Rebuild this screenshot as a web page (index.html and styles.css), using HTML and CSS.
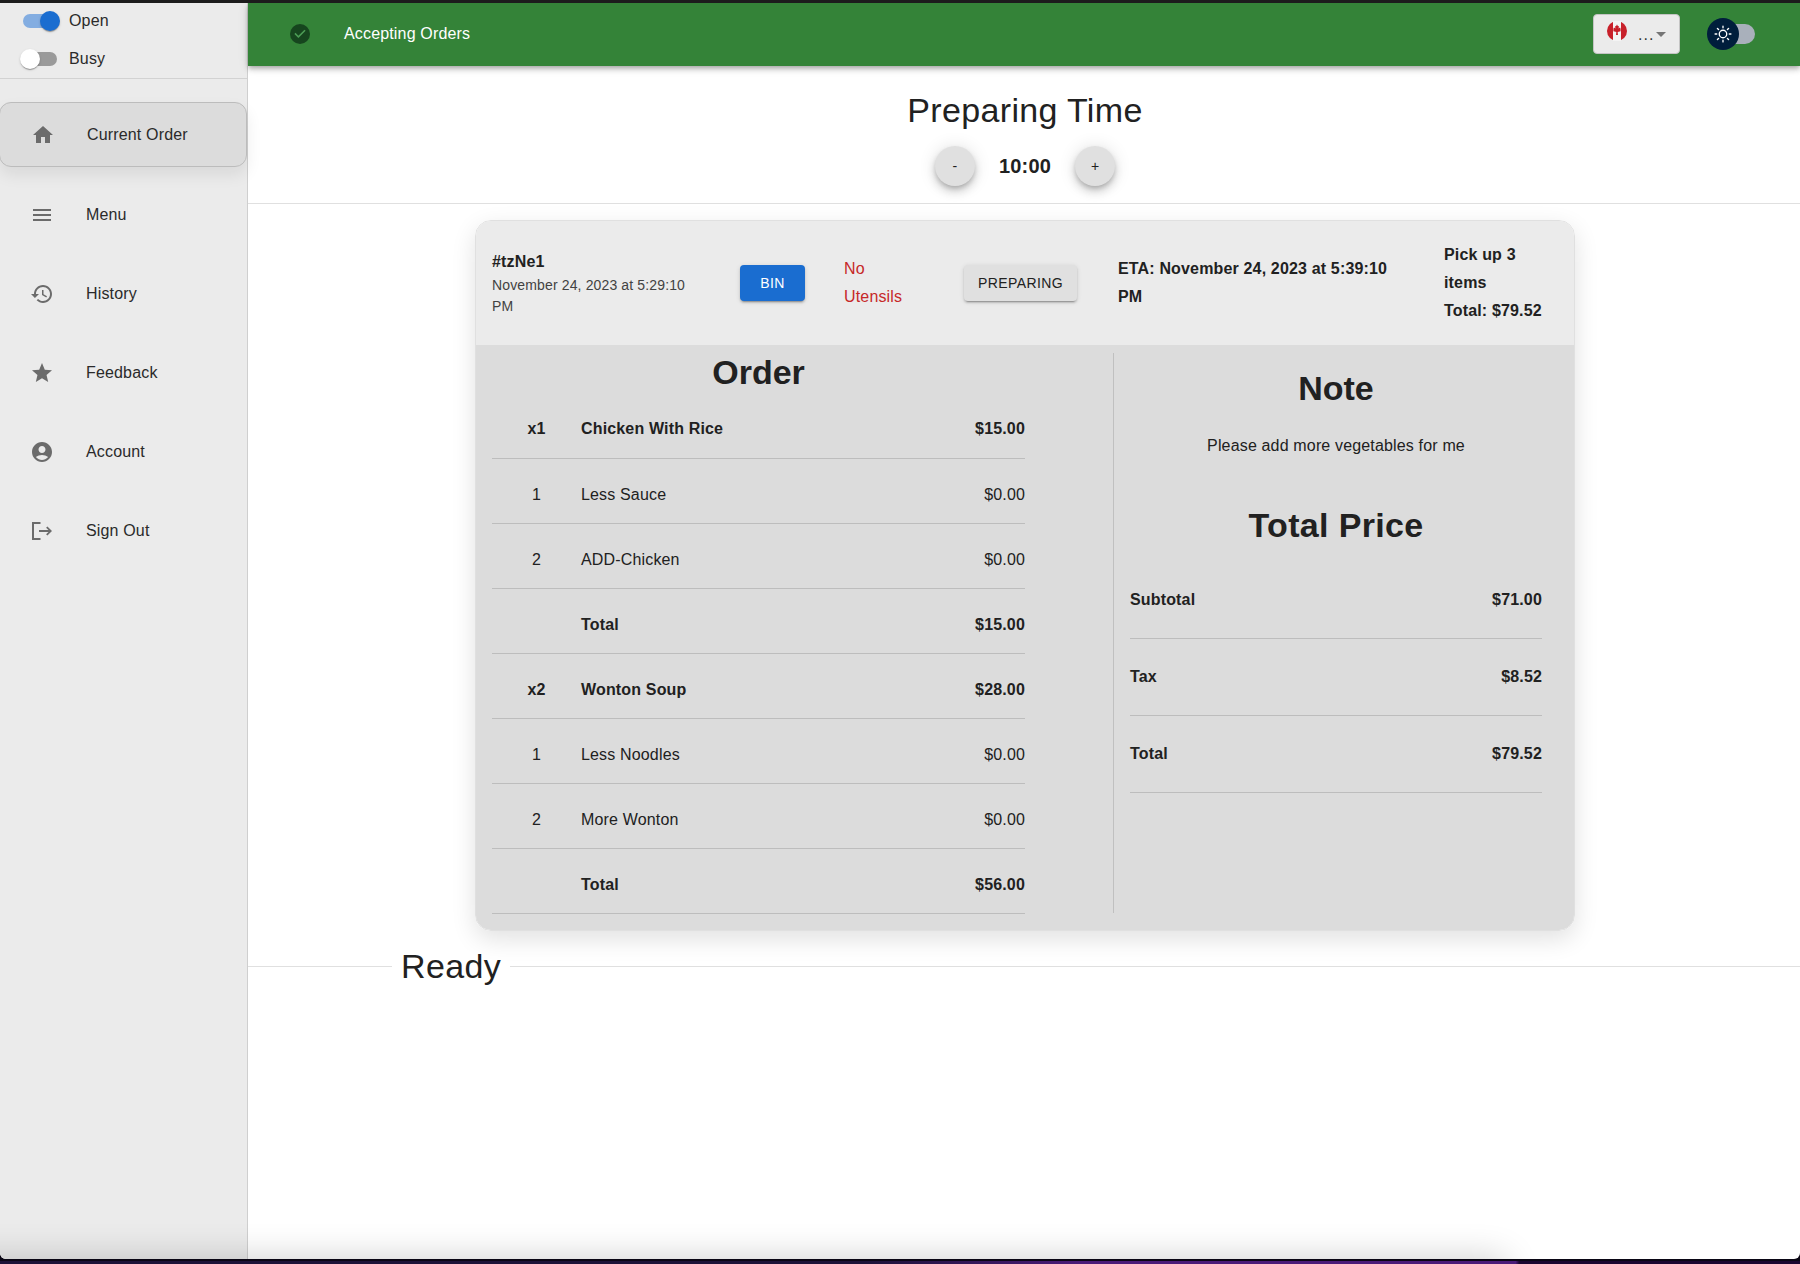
FILE: index.html
```html
<!DOCTYPE html>
<html lang="en">
<head>
    <meta charset="UTF-8">
    <meta name="viewport" content="width=device-width, initial-scale=1.0">
    <title>Current Order</title>
    <link rel="stylesheet" href="styles.css">
</head>
<body>
    <div class="window">
        <aside class="sidebar">
            <div class="switches">
                <label class="switch-row">
                    <span class="switch switch-on"><span class="switch-thumb"></span></span>
                    <span>Open</span>
                </label>
                <label class="switch-row">
                    <span class="switch"><span class="switch-thumb"></span></span>
                    <span>Busy</span>
                </label>
            </div>
            <nav class="nav">
                <a class="nav-item active">
                    <svg class="nav-icon" viewBox="0 0 24 24"><path d="M10 20v-6h4v6h5v-8h3L12 3 2 12h3v8z"/></svg>
                    <span>Current Order</span>
                </a>
                <a class="nav-item">
                    <svg class="nav-icon" viewBox="0 0 24 24"><path d="M3 18h18v-2H3v2zm0-5h18v-2H3v2zm0-7v2h18V6H3z"/></svg>
                    <span>Menu</span>
                </a>
                <a class="nav-item">
                    <svg class="nav-icon" viewBox="0 0 24 24"><path d="M13 3c-4.97 0-9 4.03-9 9H1l3.89 3.89.07.14L9 12H6c0-3.87 3.13-7 7-7s7 3.13 7 7-3.13 7-7 7c-1.93 0-3.68-.79-4.94-2.06l-1.42 1.42C8.27 19.99 10.51 21 13 21c4.97 0 9-4.03 9-9s-4.03-9-9-9zm-1 5v5l4.28 2.54.72-1.21-3.5-2.08V8H12z"/></svg>
                    <span>History</span>
                </a>
                <a class="nav-item">
                    <svg class="nav-icon" viewBox="0 0 24 24"><path d="M12 17.27 18.18 21l-1.64-7.03L22 9.24l-7.19-.61L12 2 9.19 8.63 2 9.24l5.46 4.73L5.82 21z"/></svg>
                    <span>Feedback</span>
                </a>
                <a class="nav-item">
                    <svg class="nav-icon" viewBox="0 0 24 24"><path d="M12 2C6.48 2 2 6.48 2 12s4.48 10 10 10 10-4.48 10-10S17.52 2 12 2zm0 4c1.93 0 3.5 1.57 3.5 3.5S13.93 13 12 13s-3.5-1.57-3.5-3.5S10.07 6 12 6zm0 14c-2.03 0-4.43-.82-6.14-2.88C7.55 15.8 9.68 15 12 15s4.45.8 6.14 2.12C16.43 19.18 14.03 20 12 20z"/></svg>
                    <span>Account</span>
                </a>
                <a class="nav-item">
                    <svg class="nav-icon" viewBox="0 0 24 24"><path d="M10.5 3.1H2v17.800h8.500V19H4V5h6.500zM22 12l-4.600-4.600-1.300 1.300 2.400 2.400H9v1.800h9.500l-2.400 2.400 1.300 1.300z"/></svg>
                    <span>Sign Out</span>
                </a>
            </nav>
        </aside>

        <div class="main">
            <header class="topbar">
                <svg class="status-icon" viewBox="2 2 20 20"><circle cx="12" cy="12" r="10" fill="#16451e"/><path fill="#4c9c55" d="M10 17l-5-5 1.41-1.41L10 14.17l7.59-7.59L19 8l-9 9z" transform="translate(2.4 2.4) scale(.8)"/></svg>
                <span class="status-text">Accepting Orders</span>
                <div class="lang-select">
                    <svg class="flag" viewBox="0 0 20 20">
                        <circle cx="10" cy="10" r="10" fill="#c8202a"/>
                        <rect x="6" y="0" width="8" height="20" fill="#f4f4f4"/>
                        <path fill="#c8202a" d="M10 3.500l1 1.800.9-.4-.3 2.600 1.400-1 .6 1.200v2.600l-2.900.7.300 3h-2l.3-3-2.900-.7V7.700l.6-1.200 1.400 1-.3-2.600.9.400z"/>
                    </svg>
                    <span class="lang-dots">...</span>
                    <span class="lang-caret"></span>
                </div>
                <div class="theme-toggle">
                    <span class="theme-track"></span>
                    <span class="theme-thumb">
                        <svg viewBox="0 0 24 24" class="sun"><circle cx="12" cy="12" r="4.5" fill="none" stroke="#fff" stroke-width="1.6"/><path stroke="#fff" stroke-width="1.6" stroke-linecap="round" d="M12 2.500v2M12 19.500v2M2.500 12h2M19.500 12h2M5.300 5.300l1.400 1.400M17.300 17.300l1.400 1.400M5.300 18.700l1.400-1.400M17.300 6.700l1.400-1.400"/></svg>
                    </span>
                </div>
            </header>

            <section class="timer">
                <h2 class="timer-title">Preparing Time</h2>
                <div class="timer-controls">
                    <button class="round-btn">-</button>
                    <span class="timer-value">10:00</span>
                    <button class="round-btn">+</button>
                </div>
            </section>

            <div class="order-card">
                <div class="order-head">
                    <div class="order-id">
                        <strong>#tzNe1</strong>
                        <p>November 24, 2023 at 5:29:10 PM</p>
                    </div>
                    <div><button class="btn btn-blue">BIN</button></div>
                    <div class="order-flag">No Utensils</div>
                    <div><button class="btn btn-grey">PREPARING</button></div>
                    <div class="order-eta">ETA: November 24, 2023 at 5:39:10 PM</div>
                    <div class="order-pickup">Pick up 3 items<br>Total: $79.52</div>
                </div>
                <div class="order-body">
                    <div class="order-left">
                        <h2 class="order-title">Order</h2>
                        <table class="items">
                            <tr class="bold"><td class="qty">x1</td><td>Chicken With Rice</td><td class="price">$15.00</td></tr>
                            <tr><td class="qty">1</td><td>Less Sauce</td><td class="price">$0.00</td></tr>
                            <tr><td class="qty">2</td><td>ADD-Chicken</td><td class="price">$0.00</td></tr>
                            <tr class="bold"><td class="qty"></td><td>Total</td><td class="price">$15.00</td></tr>
                            <tr class="bold"><td class="qty">x2</td><td>Wonton Soup</td><td class="price">$28.00</td></tr>
                            <tr><td class="qty">1</td><td>Less Noodles</td><td class="price">$0.00</td></tr>
                            <tr><td class="qty">2</td><td>More Wonton</td><td class="price">$0.00</td></tr>
                            <tr class="bold"><td class="qty"></td><td>Total</td><td class="price">$56.00</td></tr>
                        </table>
                    </div>
                    <div class="order-right">
                        <h2 class="side-title">Note</h2>
                        <p class="note-text">Please add more vegetables for me</p>
                        <h2 class="side-title total-title">Total Price</h2>
                        <div class="sum-row"><span>Subtotal</span><span>$71.00</span></div>
                        <div class="sum-row"><span>Tax</span><span>$8.52</span></div>
                        <div class="sum-row"><span>Total</span><span>$79.52</span></div>
                    </div>
                </div>
            </div>

            <div class="ready-divider"><span>Ready</span></div>
        </div>
        <div class="dock-shadow"></div>
    </div>
</body>
</html>
```

FILE: styles.css
```css
* {
    box-sizing: border-box;
    letter-spacing: .01em;
}
html, body {
    margin: 0;
    height: 100%;
}
body {
    font-family: "Liberation Sans", Arial, sans-serif;
    font-size: 16px;
    color: #212121;
    background: #0a0614;
    padding-top: 3px;
    padding-bottom: 5px;
    overflow: hidden;
    position: relative;
}
body::before {
    content: "";
    position: absolute;
    top: 0;
    left: 0;
    right: 0;
    height: 3px;
    background: #1c1c1c;
}
/* desktop showing under the window */
body::after {
    content: "";
    position: absolute;
    bottom: 0;
    left: 0;
    right: 0;
    height: 3px;
    background: linear-gradient(90deg, #1c1238 0, #1c1238 48%, #4a1a78 60%, #4a1a78 84.2%, #1a0530 84.4%);
}
.window {
    display: flex;
    height: 100%;
    background: #fff;
    border-radius: 0 0 6px 6px;
    overflow: hidden;
    position: relative;
}

/* sidebar */
.sidebar {
    width: 248px;
    flex-shrink: 0;
    background: #ebebeb;
    border-right: 1px solid #cfcfcf;
}
.switches {
    display: flex;
    flex-direction: column;
    gap: 2px;
    height: 76px;
    border-bottom: 1px solid #d2d2d2;
}
.switch-row {
    display: flex;
    align-items: center;
    gap: 12px;
    height: 36px;
    padding-left: 23px;
    color: #2a2a2a;
}
.switch {
    position: relative;
    width: 34px;
    height: 14px;
    border-radius: 7px;
    background: #9a9a9a;
}
.switch-thumb {
    position: absolute;
    top: -3px;
    left: -3px;
    width: 20px;
    height: 20px;
    border-radius: 50%;
    background: #fff;
    box-shadow: 0 2px 1px -1px rgba(0,0,0,.2), 0 1px 1px rgba(0,0,0,.14), 0 1px 3px rgba(0,0,0,.12);
}
.switch-on {
    background: #83ade1;
}
.switch-on .switch-thumb {
    left: 17px;
    background: #1a6dd0;
}
.nav {
    padding-top: 23px;
}
.nav-item {
    display: flex;
    align-items: center;
    height: 65px;
    margin-bottom: 14px;
    padding-left: 32px;
    color: #2a2a2a;
}
.nav-item.active {
    margin-left: -1px;
    margin-bottom: 15px;
    padding-left: 33px;
    background: #dcdcdc;
    border: 1px solid #bcbcbc;
    border-radius: 12px;
    box-shadow: 0 8px 16px rgba(0,0,0,.08);
}
.nav-icon {
    width: 24px;
    height: 24px;
    margin-left: -2px;
    margin-right: 32px;
    fill: #6b6b6b;
    flex-shrink: 0;
}

/* top bar */
.main {
    flex: 1;
    min-width: 0;
}
.topbar {
    display: flex;
    align-items: center;
    height: 63px;
    padding-left: 42px;
    padding-bottom: 2px;
    background: #348338;
    color: #fff;
    box-shadow: 0 2px 4px -1px rgba(0,0,0,.2), 0 4px 5px rgba(0,0,0,.14), 0 1px 10px rgba(0,0,0,.12);
    position: relative;
}
.status-icon {
    width: 20px;
    height: 20px;
    margin-right: 34px;
}
.lang-select {
    position: relative;
    width: 87px;
    height: 40px;
    margin-left: auto;
    background: #ebebeb;
    border: 1px solid #c4c4c4;
    border-radius: 4px;
}
.flag {
    position: absolute;
    left: 13px;
    top: 6px;
    width: 20px;
    height: 20px;
}
.lang-dots {
    position: absolute;
    left: 44px;
    top: 11px;
    color: #333;
    letter-spacing: 1px;
}
.lang-caret {
    position: absolute;
    left: 62px;
    top: 17px;
    border-left: 5px solid transparent;
    border-right: 5px solid transparent;
    border-top: 5px solid #757575;
}
.theme-toggle {
    position: relative;
    width: 62px;
    height: 32px;
    margin-left: 27px;
    margin-right: 31px;
}
.theme-track {
    position: absolute;
    left: 12px;
    top: 6px;
    width: 36px;
    height: 20px;
    border-radius: 10px;
    background: #a9b0bb;
}
.theme-thumb {
    position: absolute;
    left: 0;
    top: 0;
    width: 32px;
    height: 32px;
    border-radius: 50%;
    background: #001e3c;
    display: flex;
    align-items: center;
    justify-content: center;
}
.sun {
    width: 20px;
    height: 20px;
}

/* preparing time */
.timer {
    height: 138px;
    padding-top: 24px;
    padding-left: 2px;
    border-bottom: 1px solid #e0e0e0;
    text-align: center;
}
.timer-title {
    margin: 0;
    font-size: 34px;
    font-weight: 400;
    line-height: 40px;
}
.timer-controls {
    display: flex;
    justify-content: center;
    align-items: center;
    gap: 24px;
    margin-top: 16px;
}
.timer-value {
    font-size: 20px;
    font-weight: 700;
}
.round-btn {
    width: 40px;
    height: 40px;
    padding: 0;
    border: none;
    border-radius: 50%;
    background: #e0e0e0;
    color: #212121;
    font-family: inherit;
    font-size: 14px;
    box-shadow: 0 3px 5px -1px rgba(0,0,0,.2), 0 6px 10px rgba(0,0,0,.14), 0 1px 18px rgba(0,0,0,.12);
}

/* order card */
.order-card {
    width: 1100px;
    margin: 16px 0 0 227px;
    border: 1px solid #e0e0e0;
    border-radius: 16px;
    overflow: hidden;
    box-shadow: 0 8px 24px rgba(0,0,0,.12);
}
.order-head {
    display: grid;
    grid-template-columns: 248px 104px 120px 154px 326px 1fr;
    align-items: center;
    height: 124px;
    padding-left: 16px;
    background: #ebebeb;
}
.order-id {
    padding-top: 3px;
}
.order-id p {
    margin: 4px 0 0;
    width: 205px;
    font-size: 14px;
    line-height: 21px;
    color: #424242;
}
.btn {
    height: 36px;
    padding: 0 14px;
    border: none;
    border-radius: 4px;
    font-family: inherit;
    font-size: 14px;
    letter-spacing: .4px;
    box-shadow: 0 3px 1px -2px rgba(0,0,0,.2), 0 2px 2px rgba(0,0,0,.14), 0 1px 5px rgba(0,0,0,.12);
}
.btn-blue {
    min-width: 65px;
    background: #1a6dd0;
    color: #fff;
}
.btn-grey {
    background: #e0e0e0;
    color: #212121;
}
.order-flag {
    width: 80px;
    color: #c62828;
    line-height: 28px;
}
.order-eta {
    width: 290px;
    font-weight: 700;
    line-height: 28px;
}
.order-pickup {
    width: 105px;
    font-weight: 700;
    line-height: 28px;
}
.order-body {
    display: flex;
    height: 585px;
    background: #dcdcdc;
}
.order-left {
    width: 638px;
    padding: 0 89px 0 16px;
    position: relative;
}
.order-left::after {
    content: "";
    position: absolute;
    top: 8px;
    bottom: 17px;
    right: 0;
    width: 1px;
    background: #c0c0c0;
}
.order-title {
    margin: 0;
    height: 48px;
    font-size: 34px;
    letter-spacing: 0;
    line-height: 55px;
    text-align: center;
}
.items {
    width: 100%;
    border-collapse: collapse;
}
.items td {
    height: 65px;
    padding: 8px 0 0;
    border-bottom: 1px solid #bdbdbd;
}
.items .qty {
    width: 89px;
    text-align: center;
}
.items .price {
    text-align: right;
}
.items .bold td {
    font-weight: 700;
}
.order-right {
    flex: 1;
    padding: 0 32px 0 16px;
}
.side-title {
    margin: 0;
    font-size: 34px;
    line-height: 40px;
    text-align: center;
}
.order-right .side-title:first-child {
    margin-top: 23px;
    letter-spacing: 0;
}
.note-text {
    margin: 29px 0 0;
    text-align: center;
}
.total-title {
    margin-top: 50px;
}
.sum-row {
    display: flex;
    justify-content: space-between;
    align-items: center;
    height: 77px;
    border-bottom: 1px solid #bdbdbd;
    font-weight: 700;
}
.total-title + .sum-row {
    margin-top: 17px;
}

/* ready divider */
.ready-divider {
    display: flex;
    align-items: center;
    margin-top: 15px;
    font-size: 34px;
    letter-spacing: 0;
    line-height: 40px;
}
.ready-divider::before,
.ready-divider::after {
    content: "";
    height: 1px;
    background: #e0e0e0;
}
.ready-divider::before {
    width: 144px;
}
.ready-divider::after {
    flex: 1;
}
.ready-divider span {
    padding: 0 9px;
}

/* shadow of the dock, falls over the bottom of the window */
.dock-shadow {
    position: absolute;
    left: -80px;
    bottom: -100px;
    width: 1585px;
    height: 100px;
    box-shadow: 0 0 36px rgba(0,0,0,.2);
}
```
